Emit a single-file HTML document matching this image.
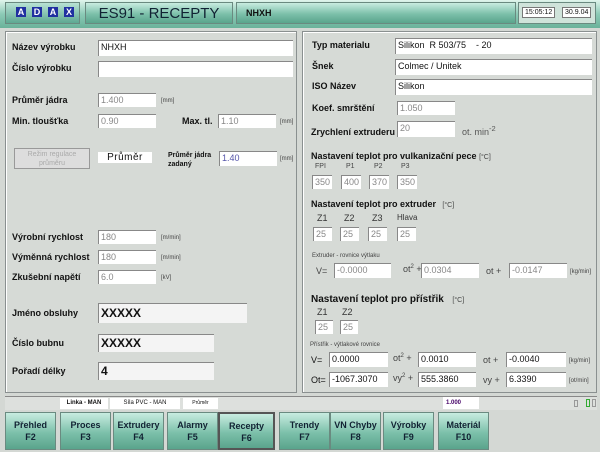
<!DOCTYPE html>
<html><head><meta charset="utf-8"><style>
*{margin:0;padding:0;box-sizing:border-box}
body{width:600px;height:452px;background:#d4d8d4;font-family:"Liberation Sans",sans-serif;position:relative;overflow:hidden;color:#111}
div,span{position:absolute}
.g{background:linear-gradient(#c8ece0,#7cc0aa 55%,#5aa48c);border:1px solid #6a8a80}
.p{border:1px solid #8a9090;background:#d6dad6;box-shadow:inset 1px 1px 0 #fff}
.l{font-size:9px;font-weight:bold;white-space:nowrap}
.i{background:#fff;border-top:1px solid #888;border-left:1px solid #888;font-size:9px;padding-left:2px;line-height:13px;color:#888;white-space:nowrap}
.d{color:#111}
.s{font-size:6px;color:#444;white-space:nowrap}
.b{top:412px;height:38px;width:51px;font-size:9px;font-weight:bold;text-align:center;line-height:12px;padding-top:6px;color:#123}
</style></head><body>
<div class="g" style="left:0;top:0;width:600px;height:28px;border:none;background:linear-gradient(#e0f4ec,#8ccab6 50%,#6ab29a)"></div>
<div class="g" style="left:5px;top:2px;width:75px;height:22px;background:linear-gradient(#b8e2d4,#5ea892)"></div>
<span style="left:16px;top:7px;width:58px;display:flex;justify-content:space-between">
<b style="background:#2030a0;color:#fff;font-size:9px;width:10px;text-align:center">A</b><b style="background:#2030a0;color:#fff;font-size:9px;width:10px;text-align:center">D</b><b style="background:#2030a0;color:#fff;font-size:9px;width:10px;text-align:center">A</b><b style="background:#2030a0;color:#fff;font-size:9px;width:10px;text-align:center">X</b></span>
<div class="g" style="left:85px;top:2px;width:148px;height:22px;font-size:15px;text-align:center;line-height:21px;color:#123">ES91 - RECEPTY</div>
<div class="g" style="left:236px;top:2px;width:280px;height:22px;font-size:9px;font-weight:bold;line-height:20px;padding-left:9px">NHXH</div>
<div style="left:518px;top:2px;width:78px;height:22px;border:1px solid #6a8a80;background:#cfe3da"></div>
<span style="left:522px;top:7px;background:#fff;font-size:7px;padding:1px 2px;border:1px solid #777">15:05:12</span>
<span style="left:562px;top:7px;background:#fff;font-size:7px;padding:1px 2px;border:1px solid #777">30.9.04</span>

<div class="p" style="left:5px;top:31px;width:292px;height:362px"></div>
<div class="p" style="left:302px;top:31px;width:295px;height:362px"></div>

<span class="l" style="left:12px;top:42px">Název výrobku</span><div class="i d" style="left:98px;top:40px;width:195px;height:16px">NHXH</div>
<span class="l" style="left:12px;top:63px">Číslo výrobku</span><div class="i" style="left:98px;top:61px;width:195px;height:16px"></div>
<span class="l" style="left:12px;top:95px">Průměr jádra</span><div class="i" style="left:98px;top:93px;width:58px;height:14px">1.400</div><span class="s" style="left:161px;top:98px">[mm]</span>
<span class="l" style="left:12px;top:116px">Min. tloušťka</span><div class="i" style="left:98px;top:114px;width:58px;height:14px">0.90</div>
<span class="l" style="left:182px;top:116px">Max. tl.</span><div class="i" style="left:218px;top:114px;width:58px;height:14px">1.10</div><span class="s" style="left:280px;top:119px">[mm]</span>
<div style="left:14px;top:148px;width:76px;height:21px;border:1px solid #999;background:#ddd;font-size:7px;color:#aaa;text-align:center;line-height:9px;padding-top:1px">Režim regulace<br>průměru</div>
<div style="left:98px;top:152px;width:54px;height:11px;background:#fff;font-size:10px;text-align:center;line-height:11px;letter-spacing:.5px">Průměr</div>
<span style="left:168px;top:151px;font-size:7px;font-weight:bold;line-height:9px">Průměr jádra<br>zadaný</span>
<div class="i" style="left:219px;top:151px;width:58px;height:15px;color:#55a">1.40</div><span class="s" style="left:280px;top:156px">[mm]</span>

<span class="l" style="left:12px;top:232px">Výrobní rychlost</span><div class="i" style="left:98px;top:230px;width:58px;height:14px">180</div><span class="s" style="left:161px;top:235px">[m/min]</span>
<span class="l" style="left:12px;top:252px">Výměnná rychlost</span><div class="i" style="left:98px;top:250px;width:58px;height:14px">180</div><span class="s" style="left:161px;top:255px">[m/min]</span>
<span class="l" style="left:12px;top:272px">Zkušební napětí</span><div class="i" style="left:98px;top:270px;width:58px;height:14px">6.0</div><span class="s" style="left:161px;top:275px">[kV]</span>
<span class="l" style="left:12px;top:308px">Jméno obsluhy</span><div class="i d" style="left:98px;top:303px;width:149px;height:20px;font-size:12px;font-weight:bold;line-height:19px;background:#f4f4f4">XXXXX</div>
<span class="l" style="left:12px;top:338px">Číslo bubnu</span><div class="i d" style="left:98px;top:334px;width:116px;height:18px;font-size:12px;font-weight:bold;line-height:17px;background:#f4f4f4">XXXXX</div>
<span class="l" style="left:12px;top:366px">Pořadí délky</span><div class="i d" style="left:98px;top:362px;width:116px;height:18px;font-size:12px;font-weight:bold;line-height:17px;background:#f4f4f4">4</div>

<span class="l" style="left:312px;top:40px">Typ materialu</span><div class="i d" style="left:395px;top:38px;width:197px;height:16px">Silikon&nbsp; R 503/75 &nbsp;&nbsp;&nbsp;- 20</div>
<span class="l" style="left:312px;top:61px">Šnek</span><div class="i d" style="left:395px;top:59px;width:197px;height:16px">Colmec / Unitek</div>
<span class="l" style="left:312px;top:81px">ISO Název</span><div class="i d" style="left:395px;top:79px;width:197px;height:16px">Silikon</div>
<span class="l" style="left:312px;top:103px">Koef. smrštění</span><div class="i" style="left:397px;top:101px;width:58px;height:14px">1.050</div>
<span class="l" style="left:311px;top:127px">Zrychlení extruderu</span><div class="i" style="left:397px;top:121px;width:58px;height:16px">20</div>
<span style="left:462px;top:124px;font-size:9px;color:#555">ot. min<sup>-2</sup></span>
<span class="l" style="left:311px;top:151px">Nastavení teplot pro vulkanizační pece <span class="s" style="position:static;font-size:7px;font-weight:normal">[°C]</span></span>
<span class="s" style="left:315px;top:163px;font-size:7px">FPI</span><span class="s" style="left:346px;top:163px;font-size:7px">P1</span><span class="s" style="left:374px;top:163px;font-size:7px">P2</span><span class="s" style="left:401px;top:163px;font-size:7px">P3</span>
<div class="i" style="left:312px;top:175px;width:20px;height:14px">350</div><div class="i" style="left:341px;top:175px;width:20px;height:14px">400</div><div class="i" style="left:369px;top:175px;width:20px;height:14px">370</div><div class="i" style="left:397px;top:175px;width:20px;height:14px">350</div>
<span class="l" style="left:311px;top:199px">Nastavení teplot pro extruder <span class="s" style="position:static;font-size:7px;font-weight:normal">&nbsp;&nbsp;[°C]</span></span>
<span style="left:317px;top:213px;font-size:9px;color:#333">Z1</span><span style="left:344px;top:213px;font-size:9px;color:#333">Z2</span><span style="left:372px;top:213px;font-size:9px;color:#333">Z3</span><span style="left:397px;top:213px;font-size:8px;color:#333">Hlava</span>
<div class="i" style="left:313px;top:227px;width:19px;height:14px">25</div><div class="i" style="left:340px;top:227px;width:19px;height:14px">25</div><div class="i" style="left:368px;top:227px;width:19px;height:14px">25</div><div class="i" style="left:397px;top:227px;width:19px;height:14px">25</div>
<span class="s" style="left:312px;top:253px">Extruder - rovnice výtlaku</span>
<span style="left:316px;top:266px;font-size:9px;color:#444">V=</span><div class="i" style="left:334px;top:263px;width:57px;height:15px">-0.0000</div>
<span style="left:403px;top:264px;font-size:9px;color:#444">ot<sup style="font-size:6px">2</sup> +</span><div class="i" style="left:421px;top:263px;width:58px;height:15px">0.0304</div>
<span style="left:486px;top:266px;font-size:9px;color:#444">ot +</span><div class="i" style="left:509px;top:263px;width:58px;height:15px">-0.0147</div><span class="s" style="left:570px;top:269px">[kg/min]</span>
<span class="l" style="left:311px;top:294px;font-size:10px">Nastavení teplot pro přístřik <span class="s" style="position:static;font-size:7px;font-weight:normal">&nbsp;&nbsp;&nbsp;[°C]</span></span>
<span style="left:317px;top:307px;font-size:9px;color:#333">Z1</span><span style="left:342px;top:307px;font-size:9px;color:#333">Z2</span>
<div class="i" style="left:315px;top:320px;width:18px;height:14px">25</div><div class="i" style="left:340px;top:320px;width:18px;height:14px">25</div>
<span class="s" style="left:310px;top:342px">Přístřik - výtlakové rovnice</span>
<span style="left:311px;top:355px;font-size:9px">V=</span><div class="i d" style="left:329px;top:352px;width:59px;height:15px">0.0000</div>
<span style="left:393px;top:353px;font-size:9px;color:#444">ot<sup style="font-size:6px">2</sup> +</span><div class="i d" style="left:418px;top:352px;width:58px;height:15px">0.0010</div>
<span style="left:483px;top:355px;font-size:9px;color:#444">ot +</span><div class="i d" style="left:506px;top:352px;width:60px;height:15px">-0.0040</div><span class="s" style="left:569px;top:358px">[kg/min]</span>
<span style="left:311px;top:375px;font-size:9px">Ot=</span><div class="i d" style="left:329px;top:372px;width:59px;height:15px">-1067.3070</div>
<span style="left:393px;top:373px;font-size:9px;color:#444">vy<sup style="font-size:6px">2</sup> +</span><div class="i d" style="left:418px;top:372px;width:58px;height:15px">555.3860</div>
<span style="left:483px;top:375px;font-size:9px;color:#444">vy +</span><div class="i d" style="left:506px;top:372px;width:60px;height:15px">6.3390</div><span class="s" style="left:569px;top:378px">[ot/min]</span>

<div style="left:5px;top:396px;width:592px;height:14px;border-top:1px solid #888;background:#dde0dd"></div>
<div style="left:60px;top:398px;width:48px;height:11px;background:#fff;font-size:6px;font-weight:bold;text-align:center;line-height:11px">Linka - MAN</div>
<div style="left:110px;top:398px;width:70px;height:11px;background:#fff;font-size:6px;text-align:center;line-height:11px">Síla PVC - MAN</div>
<div style="left:183px;top:398px;width:35px;height:11px;background:#fff;font-size:5px;text-align:center;line-height:11px">Průměr</div>
<div style="left:443px;top:397px;width:36px;height:12px;background:#fff;font-size:6px;color:#406;font-weight:bold;padding-left:3px;line-height:12px">1.000</div>
<div style="left:574px;top:400px;width:4px;height:7px;border:1px solid #999"></div>
<div style="left:586px;top:399px;width:4px;height:8px;border:1px solid #3a3"></div><div style="left:592px;top:399px;width:4px;height:8px;border:1px solid #999"></div>

<div class="g b" style="left:5px">Přehled<br>F2</div>
<div class="g b" style="left:60px">Proces<br>F3</div>
<div class="g b" style="left:113px">Extrudery<br>F4</div>
<div class="g b" style="left:167px">Alarmy<br>F5</div>
<div class="g b" style="left:218px;width:57px;border:2px solid #555">Recepty<br>F6</div>
<div class="g b" style="left:279px">Trendy<br>F7</div>
<div class="g b" style="left:330px">VN Chyby<br>F8</div>
<div class="g b" style="left:383px">Výrobky<br>F9</div>
<div class="g b" style="left:438px">Materiál<br>F10</div>
</body></html>
